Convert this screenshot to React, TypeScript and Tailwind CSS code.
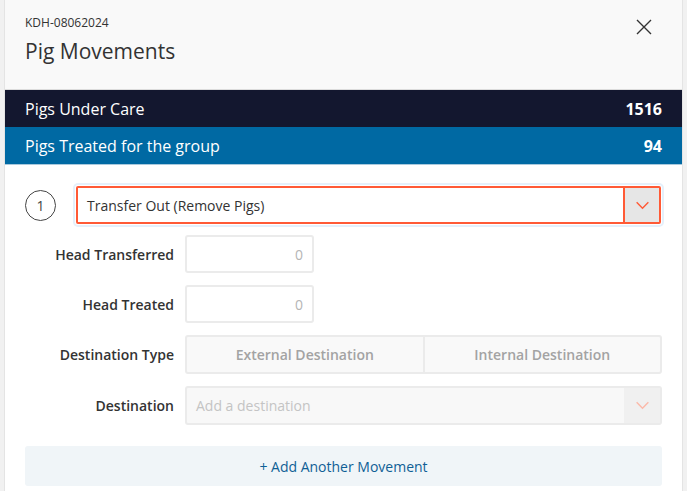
import React from 'react';

function Chevron({ className }: { className?: string }) {
  return (
    <svg viewBox="0 0 16 10" className={className} fill="none" stroke="currentColor" strokeWidth="1.6">
      <path d="M1.5 1.5 L8 8 L14.5 1.5" />
    </svg>
  );
}

function Row({ label, children }: { label: string; children: React.ReactNode }) {
  return (
    <div className="flex items-center">
      <div className="w-[160px] pr-[11px] text-right text-[14px] font-semibold text-[#333]">{label}</div>
      {children}
    </div>
  );
}

export default function App() {
  return (
    <div className="min-h-screen bg-[#f1f1f1] px-[4px] font-['Open_Sans',sans-serif]">
      <div className="h-[491px] border-x border-[#e4e4e4] bg-white">
        {/* Header */}
        <div className="relative h-[90px] border-b border-[#dcdcdc] bg-[#f9f9f9] pl-[20px] pt-[15px]">
          <div className="text-[12px] leading-[16px] text-[#333]">KDH-08062024</div>
          <div className="mt-[6px] text-[21px] leading-[28px] text-[#333]">Pig Movements</div>
          <button className="absolute right-[30px] top-[19px] text-[#333]">
            <svg viewBox="0 0 16 16" className="h-[16px] w-[16px]" stroke="currentColor" strokeWidth="1.4">
              <path d="M1 1 L15 15 M15 1 L1 15" />
            </svg>
          </button>
        </div>

        {/* Summary bars */}
        <div className="flex h-[37px] items-center justify-between bg-[#13172f] pl-[20px] pr-[20px] text-[16px] text-white">
          <span>Pigs Under Care</span>
          <span className="font-bold">1516</span>
        </div>
        <div className="flex h-[38px] items-center justify-between border-b border-[#a9c9dd] bg-[#0069a3] pl-[20px] pr-[20px] text-[16px] text-white">
          <span>Pigs Treated for the group</span>
          <span className="font-bold">94</span>
        </div>

        {/* Form */}
        <div className="px-[20px] pt-[20px]">
          <div className="flex items-center">
            <div className="flex h-[31px] w-[31px] items-center justify-center rounded-full border border-[#444] text-[14px] text-[#444]">
              1
            </div>
            <div className="ml-[19px] flex-1 rounded-[3px] p-[1px] shadow-[0_0_0_2px_#e5f0fb]">
              <div className="flex h-[38px] items-stretch rounded-[2px] border-2 border-[#ff5a36] bg-white">
                <div className="flex flex-1 items-center pl-[9px] text-[14px] text-[#333]">Transfer Out (Remove Pigs)</div>
                <div className="flex w-[36px] items-center justify-center border-l-2 border-[#ff5a36] bg-[#e6e6e6] text-[#ff5a36]">
                  <Chevron className="h-[9px] w-[15px]" />
                </div>
              </div>
            </div>
          </div>

          <div className="mt-[10px] flex flex-col gap-[12px]">
            <Row label="Head Transferred">
              <div className="flex h-[38px] w-[129px] items-center justify-end rounded-[3px] border-2 border-[#ebebeb] bg-white pr-[9px] text-[14px] text-[#b5b5b5]">
                0
              </div>
            </Row>
            <Row label="Head Treated">
              <div className="flex h-[38px] w-[129px] items-center justify-end rounded-[3px] border-2 border-[#ebebeb] bg-white pr-[9px] text-[14px] text-[#b5b5b5]">
                0
              </div>
            </Row>
            <Row label="Destination Type">
              <div className="flex h-[39px] flex-1 rounded-[3px] border-2 border-[#ebebeb] bg-[#f9f9f9] text-[14px] font-semibold text-[#a3a3a3]">
                <div className="flex flex-1 items-center justify-center border-r-2 border-[#ebebeb]">External Destination</div>
                <div className="flex flex-1 items-center justify-center">Internal Destination</div>
              </div>
            </Row>
            <Row label="Destination">
              <div className="flex h-[39px] flex-1 items-stretch rounded-[3px] border-2 border-[#ebebeb] bg-[#f8f8f8]">
                <div className="flex flex-1 items-center pl-[9px] text-[14px] text-[#c4c4c4]">Add a destination</div>
                <div className="flex w-[36px] items-center justify-center bg-[#f0f0f0] text-[#fbb9a9]">
                  <Chevron className="h-[9px] w-[15px]" />
                </div>
              </div>
            </Row>
          </div>

          <button className="mt-[21px] flex h-[40px] w-full items-center justify-center rounded-[3px] bg-[#f0f5f8] text-[14px] text-[#0f5f96]">
            + Add Another Movement
          </button>
        </div>
      </div>
    </div>
  );
}
